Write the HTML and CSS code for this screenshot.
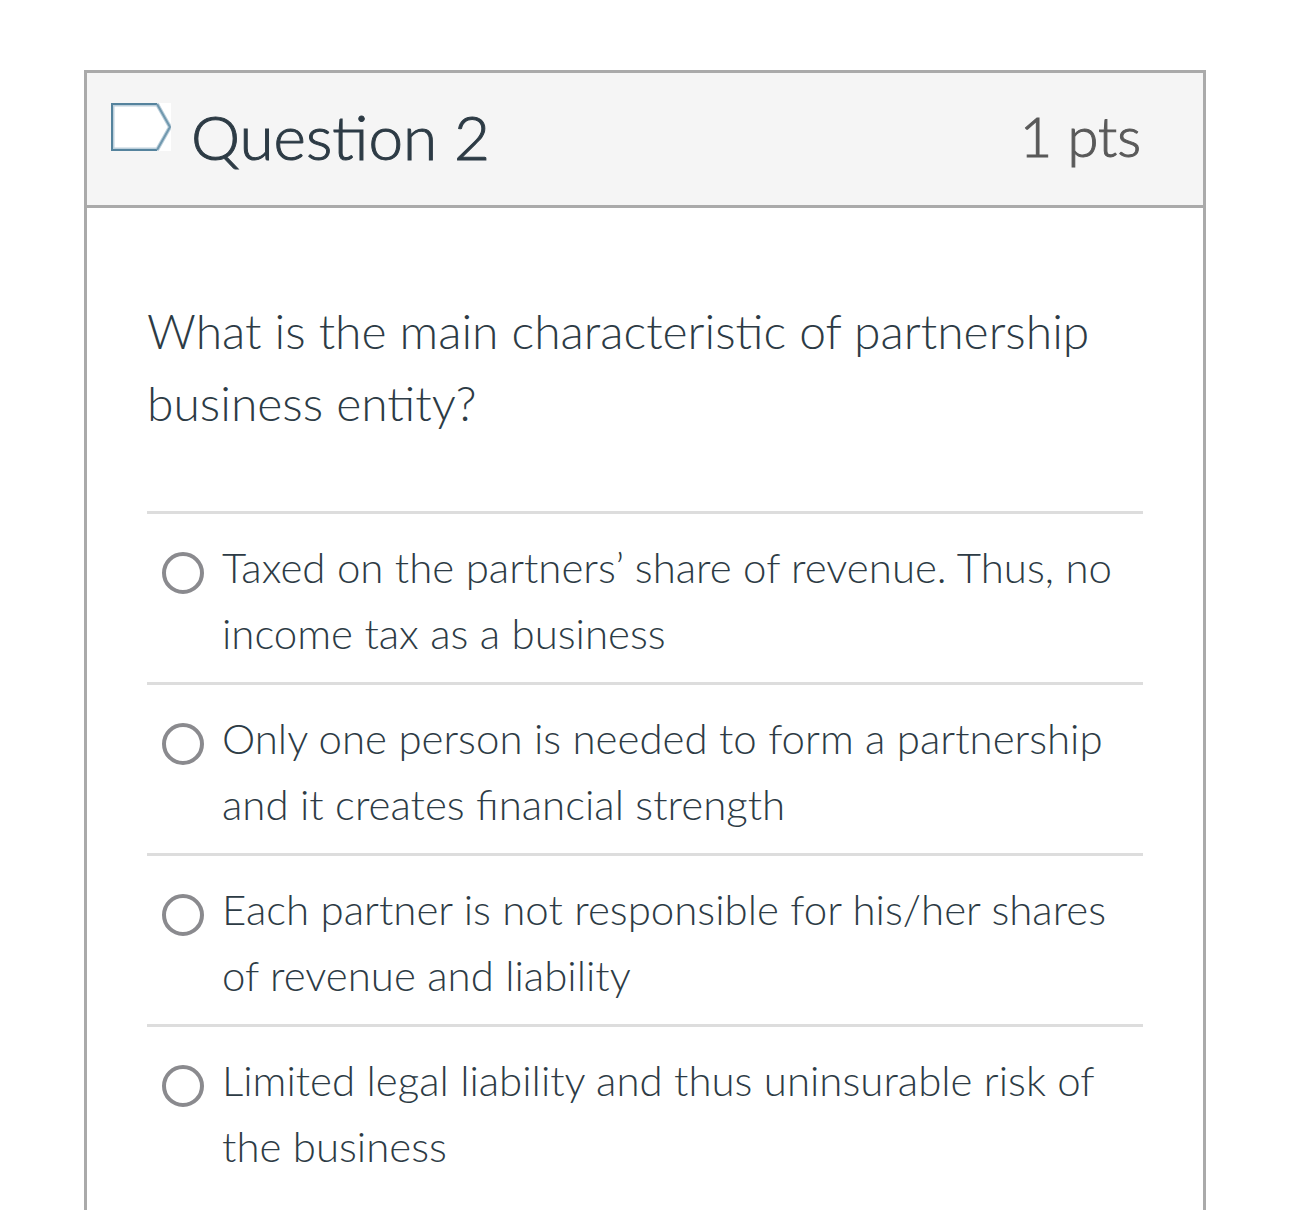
FILE: index.html
```html
<!DOCTYPE html>
<html lang="en">
<head>
<meta charset="utf-8">
<meta name="viewport" content="width=device-width, initial-scale=1">
<title>Question 2</title>
<link rel="stylesheet" href="styles.css">
</head>
<body>
<main class="question">
  <header class="question-header">
    <button class="flag" type="button" aria-label="Flag question">
      <svg class="flag-icon" viewBox="0 0 60 48" aria-hidden="true">
        <path class="flag-back" d="M0 0H60V48H0Z"/>
        <path class="flag-halo" d="M45 2H2V46H45"/>
        <path class="flag-tip-halo" d="M46 1L59 24L46 47"/>
        <path class="flag-line" d="M46 1H1V47H46"/>
        <path class="flag-tip" d="M46 1L59 24L46 47"/>
      </svg>
    </button>
    <h1 class="question-title">Question 2</h1>
    <span class="points">1 pts</span>
  </header>
  <form class="question-body">
    <fieldset class="answers">
      <legend class="prompt">What is the main characteristic of partnership business entity?</legend>
      <label class="answer"><input class="radio" type="radio" name="answer"><span>Taxed on the partners’ share of revenue. Thus, no income tax as a business</span></label>
      <label class="answer"><input class="radio" type="radio" name="answer"><span>Only one person is needed to form a partnership and it creates financial strength</span></label>
      <label class="answer"><input class="radio" type="radio" name="answer"><span>Each partner is not responsible for his/her shares of revenue and liability</span></label>
      <label class="answer"><input class="radio" type="radio" name="answer"><span>Limited legal liability and thus uninsurable risk of the business</span></label>
    </fieldset>
  </form>
</main>
</body>
</html>
```
FILE: styles.css
```css
* {
  box-sizing: border-box;
}

body {
  margin: 0;
  padding: 70px 84px 0;
  background: #fff;
  color: #2d3b45;
  font-family: Lato, "Liberation Sans", sans-serif;
  font-weight: 300;
}

.question {
  border: 3px solid #aaa;
  border-bottom: 0;
  min-height: calc(100vh - 70px);
}

.question-header {
  display: flex;
  align-items: center;
  padding: 0 62px 6px 24px;
  height: 135px;
  background: #f5f5f5;
  border-bottom: 3px solid #aaa;
}

.flag {
  align-self: flex-start;
  margin: 30px 20px 0 0;
  padding: 0;
  border: 0;
  background: none;
}

.flag-icon {
  display: block;
  width: 60px;
  height: 48px;
}

.flag-back {
  fill: #fff;
}

.flag-halo,
.flag-tip-halo {
  fill: none;
  stroke: #bdd0dc;
  stroke-width: 3;
}

.flag-tip-halo {
  stroke-width: 4;
}

.flag-line,
.flag-tip {
  fill: none;
  stroke: #55839d;
  stroke-width: 2;
}

.flag-tip {
  stroke: #7098ae;
}

.question-title {
  margin: 0;
  font-size: 62px;
  line-height: 72px;
  font-weight: 300;
  -webkit-text-stroke: 1px currentColor;
}

.points {
  margin-left: auto;
  color: #595959;
  font-size: 56px;
  line-height: 72px;
  -webkit-text-stroke: 1px currentColor;
}

.question-body {
  padding: 87px 60px 0;
}

.answers {
  margin: 0;
  padding: 0;
  border: 0;
}

.prompt {
  padding: 0 0 72px;
  font-size: 48px;
  line-height: 72px;
}

.answer {
  display: flex;
  gap: 18px;
  padding: 20px 15px 16px;
  border-top: 3px solid #ddd;
  font-size: 42px;
  line-height: 66px;
}

.radio {
  appearance: none;
  flex: none;
  width: 42px;
  height: 42px;
  margin: 18px 0 0;
  border: 4px solid #8a8a8e;
  border-radius: 50%;
  background: #fff;
}

.radio:checked {
  border-width: 12px;
}
```
